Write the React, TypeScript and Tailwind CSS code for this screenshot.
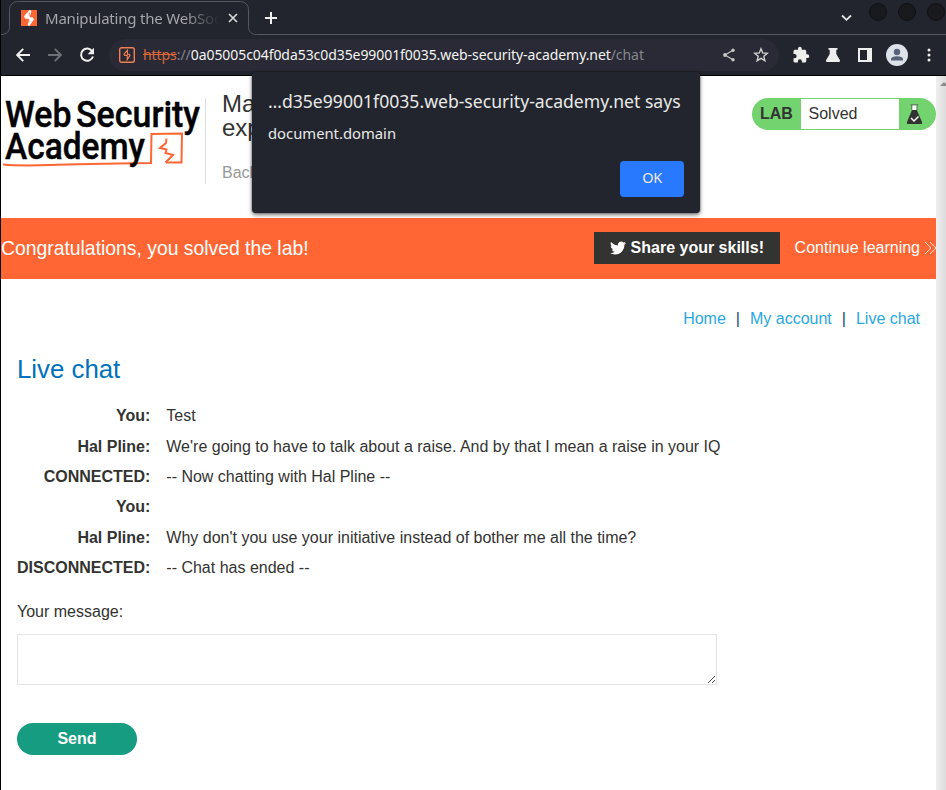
import React from "react";

const UI = "font-['Noto_Sans',sans-serif]";

const messages = [
  { who: "You:", text: "Test" },
  { who: "Hal Pline:", text: "We're going to have to talk about a raise. And by that I mean a raise in your IQ" },
  { who: "CONNECTED:", text: "-- Now chatting with Hal Pline --" },
  { who: "You:", text: "" },
  { who: "Hal Pline:", text: "Why don't you use your initiative instead of bother me all the time?" },
  { who: "DISCONNECTED:", text: "-- Chat has ended --" },
];

function TabStrip() {
  return (
    <div className="relative flex h-[35px] shrink-0 items-center bg-[#23252e]">
      <svg className="absolute inset-0 h-[35px] w-full" viewBox="0 0 945 35" fill="none">
        <path d="M0 34.5c6 0 8.5-3 8.5-8V9.5a8 8 0 0 1 8-8h223a8 8 0 0 1 8 8v17c0 5 3 8 8 8H945" stroke="#555761" />
      </svg>
      <svg className="ml-[20px] mt-[1px] h-4 w-4 shrink-0" viewBox="0 0 16 16">
        <path d="M0 0h16v16H0z" fill="#ff6633" />
        <path d="M8.500 0 3 6.200 4.300 8.700H8L6.800 14.500 7.500 16H8.300L13 9.500 11.700 7.200H8.800L10.300 1.500 9.600 0Z" fill="#fff" />
        <path d="M8.300 2.500V6.300M7.900 9.500V13" stroke="#ff6633" strokeWidth=".7" />
      </svg>
      <div className={`${UI} ml-[8px] w-[174px] overflow-hidden bg-linear-to-r from-[#a9aaaf] from-80% to-transparent bg-clip-text text-[15px] leading-5 tracking-[-0.2px] whitespace-nowrap text-transparent`}>
        Manipulating the WebSoc
      </div>
      <svg className="ml-[9px] h-[10px] w-[10px]" viewBox="0 0 10 10" stroke="#d5d6d9" strokeWidth="1.7">
        <path d="m1 1 8 8M9 1 1 9" />
      </svg>
      <svg className="ml-[27px] h-3 w-3" viewBox="0 0 12 12" stroke="#f0f0ee" strokeWidth="2">
        <path d="M6 0v12M0 6h12" />
      </svg>
      <svg className="ml-[564px] h-[8px] w-[11px]" viewBox="0 0 11 8" fill="none" stroke="#e8e8e6" strokeWidth="1.8">
        <path d="m1 1.5 4.5 4.3L10 1.5" />
      </svg>
      <div className="-mt-[11px] ml-[17px] flex w-[77px] gap-[11px] overflow-hidden">
        {[0, 1, 2].map((i) => (
          <div key={i} className="h-[18px] w-[18px] shrink-0 rounded-full border border-[#101115] bg-[#191a1e]" />
        ))}
      </div>
    </div>
  );
}

function Toolbar() {
  return (
    <div className="flex h-[41px] shrink-0 items-center border-b border-black bg-[#23252e]">
      <svg className="ml-[15px] h-[14px] w-[14px]" viewBox="0 0 14 14" fill="none" stroke="#f0f0ee" strokeWidth="1.9">
        <path d="M14 7H1.5M7.2 .8 1.2 7l6 6.2" />
      </svg>
      <svg className="ml-[18px] h-[14px] w-[14px]" viewBox="0 0 14 14" fill="none" stroke="#6e7078" strokeWidth="1.9">
        <path d="M0 7h12.5M6.8 .8l6 6.2-6 6.2" />
      </svg>
      <svg className="ml-[17px] h-[16px] w-[16px]" viewBox="0 0 16 16" fill="none" stroke="#f0f0ee" strokeWidth="2">
        <path d="M13.2 4.2A6.1 6.1 0 1 0 14 9.5" />
        <path d="M15 .8v6.4H8.6Z" fill="#f0f0ee" stroke="none" />
      </svg>
      <div className="ml-[14px] flex h-8 w-[670px] items-center rounded-full bg-[#292a35]">
        <svg className="ml-[10px] h-4 w-4" viewBox="0 0 16 16" fill="none" stroke="#f08050">
          <rect x=".7" y=".7" width="14.6" height="14.6" rx="1.8" strokeWidth="1.4" />
          <path d="M8.500 3.200 5 7.200 5.600 8.400H8.200V12.600L11 8.400 10.300 7.300H8.500Z" strokeWidth="1.1" />
        </svg>
        <div className={`${UI} ml-[8px] w-[502px] text-[14px] leading-5 tracking-[-0.068px] whitespace-nowrap text-[#85878f]`}>
          <span className="text-[#d9673b] line-through">https</span>
          <span>://</span>
          <span className="text-[#f3f3f1]">0a05005c04f0da53c0d35e99001f0035.web-security-academy.net</span>
          <span>/chat</span>
        </div>
        <svg className="ml-[78px] h-[14px] w-[12px]" viewBox="0 0 12 14" fill="#c5c6c4" stroke="#c5c6c4">
          <path d="M10 2.2 2 7l8 4.8" fill="none" strokeWidth="1.2" />
          <circle cx="10" cy="2.2" r="1.7" stroke="none" />
          <circle cx="2" cy="7" r="1.9" stroke="none" />
          <circle cx="10" cy="11.8" r="1.7" stroke="none" />
        </svg>
        <svg className="ml-[18px] h-[16px] w-[16px]" viewBox="0 0 16 16" fill="none" stroke="#d0d1cf" strokeWidth="1.4">
          <path d="m8 1.8 1.7 4.1 4.6.4-3.5 3 1.1 4.4L8 11.4l-3.9 2.3 1.1-4.4-3.5-3 4.6-.4Z" />
        </svg>
      </div>
      <svg className="ml-[13px] h-[18px] w-[18px]" viewBox="0 0 24 24" fill="#eeeeec">
        <path d="M20.5 11H19V7a2 2 0 0 0-2-2h-4V3.500a2.500 2.500 0 0 0-5 0V5H4a2 2 0 0 0-2 2v3.800h1.500a2.700 2.700 0 0 1 0 5.400H2V20a2 2 0 0 0 2 2h3.800v-1.500a2.700 2.700 0 0 1 5.400 0V22H17a2 2 0 0 0 2-2v-4h1.500a2.500 2.500 0 0 0 0-5Z" />
      </svg>
      <svg className="ml-[16px] h-[14px] w-[14px]" viewBox="0 0 14 14" fill="#eeeeec">
        <path d="M2.500 0h9v1.800h-1.200v4.200l3.500 6q.8 2-1 2H1.200q-1.800 0-1-2l3.500-6V1.800H2.500Z" />
      </svg>
      <div className="ml-[18px] h-[14px] w-[14px] border-2 border-r-[5px] border-[#eeeeec]" />
      <svg className="ml-[14px] h-[22px] w-[22px]" viewBox="0 0 22 22">
        <circle cx="11" cy="11" r="11" fill="#dde1e8" />
        <circle cx="11" cy="8" r="3.2" fill="#56617a" />
        <path d="M5 16.500v-1.400Q5.500 12.300 11 12.300t6 2.800v1.400Z" fill="#56617a" />
      </svg>
      <svg className="ml-[19px] h-[14px] w-[4px]" viewBox="0 0 4 14" fill="#eeeeec">
        <circle cx="2" cy="2" r="1.500" />
        <circle cx="2" cy="7" r="1.500" />
        <circle cx="2" cy="12" r="1.500" />
      </svg>
    </div>
  );
}

function Logo() {
  return (
    <svg className="mt-[20px] h-[76px] w-[204px] shrink-0" viewBox="1 96 204 76">
      <g fill="#000" stroke="#000" strokeWidth=".4" className="font-['Roboto',sans-serif] font-medium" fontSize="36.500">
        <text x="5" y="126.500" textLength="66.500" lengthAdjust="spacingAndGlyphs">Web</text>
        <text x="76" y="126.500" textLength="124" lengthAdjust="spacingAndGlyphs">Security</text>
      </g>
      <path d="M3 164.500Q20 166 50 165T151 163L151.500 134Q167 133.800 182 133.500L181.500 162.500H166" fill="none" stroke="#ff6633" strokeWidth="2" />
      <path d="M166.500 138.500 166 143 160 148 166.500 149.500 165.500 153 173 155 165.500 162.500" fill="none" stroke="#ff6633" strokeWidth="2" />
      <text x="5" y="159" textLength="140" lengthAdjust="spacingAndGlyphs" fontSize="36.500" stroke="#000" strokeWidth=".4" className="font-['Roboto',sans-serif] font-medium">Academy</text>
    </svg>
  );
}

function LabStatus() {
  return (
    <div className="mt-[22px] ml-auto flex h-8 w-[184px] items-center overflow-hidden rounded-full bg-[#72d36f]">
      <b className="w-[49px] pl-[8px] text-base leading-8">LAB</b>
      <div className="h-[30px] w-[98px] bg-white pl-[7.500px] leading-[30px]">Solved</div>
      <svg className="ml-[7px] h-[21px] w-[17px]" viewBox="0 0 17 21">
        <path d="M6 6h4.800l5.200 12q.7 2-1 2H2q-1.700 0-1-2Z" fill="#333" />
        <path d="M6 1.200h4.800V6H6Z" fill="#fff" />
        <path d="M4.500 .8h7.800M5.800 1v5M11 1v5" fill="none" stroke="#5d6b5c" strokeWidth="1" />
        <path d="m5 14 3 3 4.500-4.500" fill="none" stroke="#fff" strokeWidth="1.500" />
      </svg>
    </div>
  );
}

function Dialog() {
  return (
    <div className={`${UI} absolute top-[72px] left-[251px] flex h-[141px] w-[448px] flex-col rounded-[4px] bg-[#23252e] px-4 pt-[17px] text-[#e8e9e7] shadow-[0_2px_4px_rgba(0,0,0,0.5),0_0_2px_rgba(0,0,0,0.5)]`}>
      <div className="text-[17.600px] leading-6 whitespace-nowrap">…d35e99001f0035.web-security-academy.net says</div>
      <div className="mt-[10px] text-[14.800px] leading-5">document.domain</div>
      <button className="mt-[18px] h-9 w-16 self-end rounded-[4px] bg-[#2979ff] pb-[2px] text-[14.500px] tracking-[-0.3px]">OK</button>
    </div>
  );
}

export default function App() {
  return (
    <div className="relative flex h-[790px] w-[946px] flex-col overflow-hidden border-l border-black bg-white font-['Liberation_Sans',Arial,sans-serif] text-base text-[#333332]">
      <TabStrip />
      <Toolbar />
      <div className="flex min-h-0 flex-1">
        <main className="flex w-[935px] flex-col">
          <header className="flex h-[142px] shrink-0 items-start">
            <Logo />
            <div className="mt-[22px] h-[86px] border-l border-[#dedede] pl-4">
              <div className="-mt-[6px] text-[24px] leading-6">Ma<br />exp</div>
              <div className="mt-[23px] leading-5 text-[#999]">Back</div>
            </div>
            <LabStatus />
          </header>
          <section className="flex h-[61px] shrink-0 items-center bg-[#ff6633] text-white">
            <div className="text-[19.350px]">Congratulations, you solved the lab!</div>
            <div className="-mt-px ml-auto flex h-8 w-[186px] items-center bg-[#333332] pl-4 font-bold">
              <svg className="mr-[5px] h-4 w-4" viewBox="0 0 24 24" fill="#fff">
                <path d="M23.953 4.570a10 10 0 0 1-2.825.775 4.958 4.958 0 0 0 2.163-2.723 9.990 9.990 0 0 1-3.127 1.184 4.920 4.920 0 0 0-8.384 4.482C7.690 8.095 4.067 6.130 1.640 3.162a4.822 4.822 0 0 0-.666 2.475c0 1.710.870 3.213 2.188 4.096a4.904 4.904 0 0 1-2.228-.616v.060a4.923 4.923 0 0 0 3.946 4.827 4.996 4.996 0 0 1-2.212.085 4.936 4.936 0 0 0 4.604 3.417 9.867 9.867 0 0 1-6.102 2.105c-.390 0-.779-.023-1.170-.067a13.995 13.995 0 0 0 7.557 2.209c9.053 0 13.998-7.496 13.998-13.985 0-.210 0-.420-.015-.630A9.935 9.935 0 0 0 24 4.590z" />
              </svg>
              Share your skills!
            </div>
            <div className="-mt-[2px] ml-[15px]">Continue learning</div>
            <svg className="-mt-px ml-[5px] h-[14px] w-[11px]" viewBox="0 0 11 14" fill="none" stroke="#fff" strokeWidth=".8">
              <path d="m0 1 6 6-6 6M5 1l6 6-6 6" />
            </svg>
          </section>
          <nav className="mt-[30px] mr-4 flex h-5 shrink-0 items-center justify-end gap-[10px] text-[#29a7df]">
            <span>Home</span>
            <span className="text-[#094b75]">|</span>
            <span>My account</span>
            <span className="text-[#094b75]">|</span>
            <span>Live chat</span>
          </nav>
          <h1 className="mt-[25px] ml-4 text-[25.800px] leading-[30px] text-[#0071bc]">Live chat</h1>
          <div className="mt-[17.200px] ml-4 grid grid-cols-[133.300px_1fr] gap-x-4 whitespace-nowrap">
            {messages.map((m, i) => (
              <React.Fragment key={i}>
                <b className="h-[30.390px] text-right leading-[30.390px]">{m.who}</b>
                <span className="h-[30.390px] leading-[30.390px]">{m.text}</span>
              </React.Fragment>
            ))}
          </div>
          <label className="mt-[18.800px] ml-4 leading-5">Your message:</label>
          <div className="mt-[12px] ml-4 flex h-[51px] w-[700px] items-end justify-end border border-[#e4e4e4] p-px">
            <svg className="h-[7px] w-[7px]" viewBox="0 0 7 7" stroke="#50505a">
              <path d="M0 7 7 0M4 7l3-3" />
            </svg>
          </div>
          <button className="mt-[38px] ml-4 h-8 w-[120px] shrink-0 rounded-full bg-[#169c80] font-bold text-white">Send</button>
        </main>
        <div className="flex w-[10px] justify-end bg-linear-to-r from-[#efefef] to-[#dcdcdc]">
          <svg className="mt-[6px] h-[4px] w-[6px]" viewBox="0 0 6 4"><path d="M0 4 4 0l4 4Z" fill="#8a8a8a" /></svg>
        </div>
      </div>
      <Dialog />
    </div>
  );
}
